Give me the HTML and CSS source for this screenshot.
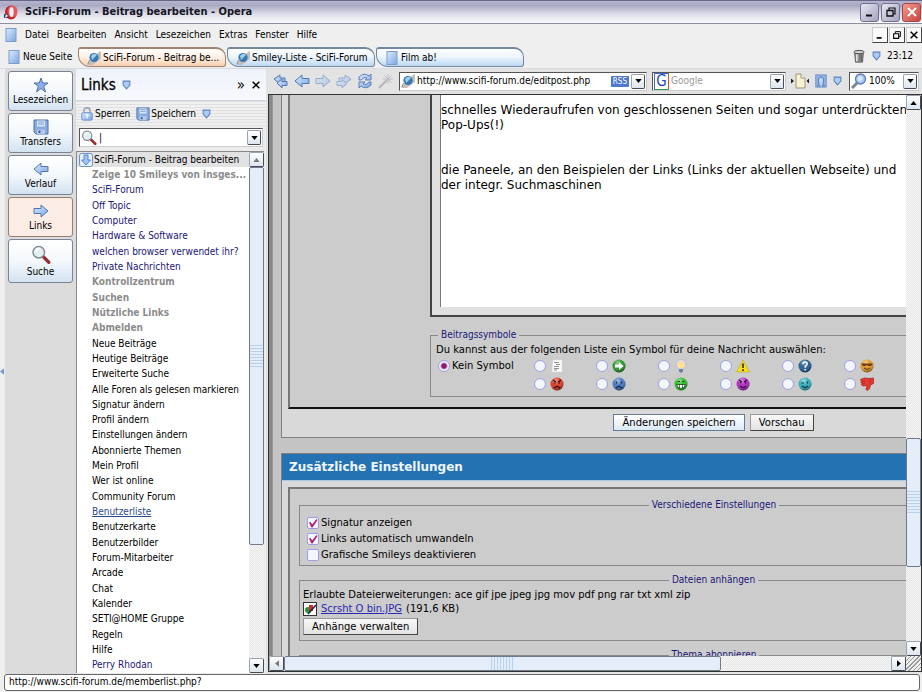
FILE: index.html
```html
<!DOCTYPE html>
<html lang="de">
<head>
<meta charset="utf-8">
<title>SciFi-Forum - Beitrag bearbeiten - Opera</title>
<link rel="stylesheet" href="styles.css">
</head>
<body>
<svg class="defs" aria-hidden="true">
  <defs>
    <linearGradient id="blue" x1="0" y1="0" x2="1" y2="1"><stop offset="0" stop-color="#dcebff"/><stop offset="1" stop-color="#7ba6e0"/></linearGradient>
    <radialGradient id="gloss" cx=".4" cy=".25" r=".7"><stop offset="0" stop-color="#fff" stop-opacity=".5"/><stop offset=".5" stop-color="#fff" stop-opacity="0"/><stop offset="1" stop-color="#000" stop-opacity=".35"/></radialGradient>
    <symbol id="page" viewBox="0 0 12 14"><rect x="1" y=".5" width="10" height="13" fill="url(#blue)" stroke="#7d9cc6"/></symbol>
    <symbol id="planet" viewBox="0 0 14 14"><path d="M0 13L13 0L14 1V8L6 14H1z" fill="#c4bfbb"/><circle cx="7" cy="6.500" r="4.600" fill="#3478b4"/><path d="M4 5Q7 1 10 4L5 9z" fill="#9ccfeb"/><path d="M1 13Q1 10 5 7" fill="none" stroke="#8a8480" stroke-width=".9"/></symbol>
    <symbol id="down" viewBox="0 0 8 9"><path d="M1 1h6v3.500L4 8 1 4.500z" fill="#a9cdf5" stroke="#6383bb"/></symbol>
    <symbol id="left" viewBox="0 0 16 14"><path d="M1 7L8 1v3.500h7v5H8V13z" fill="url(#blue)" stroke="#5077b5"/></symbol>
    <symbol id="right" viewBox="0 0 16 14"><path d="M15 7L8 1v3.500H1v5h7V13z" fill="url(#blue)" stroke="#5077b5"/></symbol>
    <symbol id="rewind" viewBox="0 0 16 14"><path d="M1 5l6-4v3h5v4H7v2z" fill="url(#blue)" stroke="#5077b5"/><path d="M4 9l5-4v2.500h5v4H9V14z" fill="url(#blue)" stroke="#5077b5"/></symbol>
    <symbol id="forward" viewBox="0 0 16 14"><path d="M15 5L9 1v3H3v4h6v2z" fill="url(#blue)" stroke="#5077b5"/><path d="M11 9.500L6 5.500v2H1v4h5V14z" fill="url(#blue)" stroke="#5077b5"/></symbol>
    <symbol id="reload" viewBox="0 0 16 16"><path d="M2 7V4q5-5 10-1l2-2v6H8l2-2q-3-2-6 2zM14 9v3q-5 5-10 1l-2 2V9h6l-2 2q3 2 6-2z" fill="url(#blue)" stroke="#5077b5" stroke-width=".9"/></symbol>
    <symbol id="wand" viewBox="0 0 16 16"><path d="M1 15L9 7" stroke="#888" stroke-width="2"/><path d="M10 1v10M5 6h10M6.500 2.500l7 7M13.500 2.500l-7 7" stroke="#8e98aa"/></symbol>
    <symbol id="star" viewBox="0 0 16 16"><path d="M8 1l1.700 5H15l-4.300 3.200L12.500 15 8 11.500 3.500 15l1.800-5.800L1 6h5.300z" fill="#8db2ea" stroke="#4f70a8"/></symbol>
    <symbol id="disk" viewBox="0 0 16 16"><path d="M1 1h14v14H3l-2-2z" fill="#88abe0" stroke="#4d6ea8"/><path d="M4 1.500h8v6H4z" fill="#d8e5f8"/><path d="M5 3h6M5 5h6" stroke="#829cc8"/><path d="M4 10.500h8V15H4z" fill="#b5c9e8"/><path d="M5.500 11.500h2V14h-2z" fill="#46608f"/></symbol>
    <symbol id="lens" viewBox="0 0 18 18"><path d="M11 10.500l5 5" stroke="#962f32" stroke-width="3" stroke-linecap="round"/><circle cx="7" cy="6.500" r="5.200" fill="#e2efef" stroke="#848a90" stroke-width="1.300"/><path d="M4 6q1-3 4-3" fill="none" stroke="#fff" stroke-width="1.500"/></symbol>
    <symbol id="zoomlens" viewBox="0 0 16 16"><path d="M7 9l-6 6" stroke="#7c8696" stroke-width="3"/><circle cx="9.500" cy="6" r="5" fill="#a9c8f2" stroke="#5c7db4" stroke-width="1.300"/><circle cx="9" cy="5.500" r="2.500" fill="#d9e8fd"/></symbol>
    <symbol id="lock" viewBox="0 0 14 16"><path d="M3.500 8V4q0-3 3.500-3t3.500 3v4" fill="none" stroke="#9ba6b5" stroke-width="1.800"/><rect x="1" y="6.500" width="12" height="8.500" rx="1.500" fill="url(#blue)" stroke="#6689bd"/><path d="M5.500 9.500q1.500-1.500 3 0-.5 1-1.500 1.500v2" fill="none" stroke="#fff" stroke-width="1.200"/></symbol>
    <symbol id="docdown" viewBox="0 0 14 14"><rect x=".5" y=".5" width="13" height="13" rx="2" fill="#e5f0ff" stroke="#6e91c4"/><path d="M5 2h4v5h2.500L7 12 2.500 7H5z" fill="#9fc3f5" stroke="#4c76bd" stroke-width=".8"/></symbol>
    <symbol id="trash" viewBox="0 0 14 16"><path d="M2 4h10l-1 11H3z" fill="#999" stroke="#555"/><path d="M4.500 6v8" stroke="#eee" stroke-width="1.500"/><path d="M8 6v8M10 6v8" stroke="#555"/><ellipse cx="7" cy="3.500" rx="6" ry="2" fill="#ccc" stroke="#444"/></symbol>
    <symbol id="fit" viewBox="0 0 18 16"><path d="M5 1h5l4 4v10H5z" fill="#f7f3d2" stroke="#9a9678"/><path d="M10 1v4h4" fill="#fff" stroke="#9a9678"/><path d="M0 5.500L3 8l-3 2.500zM18 5.500L15.500 8l2.500 2.500z" fill="#222"/></symbol>
    <symbol id="user" viewBox="0 0 14 16"><rect x="1" y="1" width="12" height="14" fill="#8fb2e6" stroke="#6d90c6"/><path d="M2.500 13.500h2.500q0-2-1-4.500-.5-5.500 3-5.500t3 5.500q-1 2.500-1 4.500h2.500" fill="#b9d3f6" stroke="#4e6fa8"/></symbol>
    <symbol id="opera" viewBox="0 0 16 16"><ellipse cx="8" cy="8.500" rx="6" ry="7" fill="#c3222b"/><ellipse cx="9.500" cy="7.500" rx="5" ry="6" fill="#e4575a"/><ellipse cx="8.500" cy="8" rx="2.200" ry="5" fill="#f4eef4"/><path d="M1 10h4v4H1z" fill="#36465c"/><path d="M3 10l2 2-3 2" fill="#e8edf5"/></symbol>
    <symbol id="note" viewBox="0 0 14 14"><path d="M3 1h9v12H2z" fill="#fafafa" stroke="#ddd" stroke-width=".5"/><path d="M4 3.500h5M6 5.500h4M4 7.500h5M4 9.500h5M4 11h3" stroke="#777" stroke-width=".8"/></symbol>
    <symbol id="go" viewBox="0 0 14 14"><circle cx="7" cy="7" r="6.500" fill="#2c962c"/><circle cx="7" cy="7" r="6.500" fill="url(#gloss)"/><path d="M3 5.500h4V3l4.500 4L7 11V8.500H3z" fill="#fff"/></symbol>
    <symbol id="bulb" viewBox="0 0 14 14"><circle cx="7" cy="5.500" r="5" fill="#dedbe4" stroke="#b2afb9" stroke-width=".6"/><circle cx="7" cy="6" r="3.200" fill="#ffe28a"/><path d="M5 10h4v2.500L7 14l-2-1.500z" fill="#6c7da8"/></symbol>
    <symbol id="warn" viewBox="0 0 14 14"><path d="M7 1l6.500 12H.5z" fill="#f5dd20" stroke="#c2a917" stroke-width=".6"/><path d="M7 4.500v4.500M7 10.300v1.700" stroke="#222" stroke-width="1.500"/></symbol>
    <symbol id="ask" viewBox="0 0 14 14"><circle cx="7" cy="7" r="6.500" fill="#245d90"/><circle cx="7" cy="7" r="6.500" fill="url(#gloss)"/><path d="M5 5q.2-2 2.200-2T9.200 5Q9 6.500 7.200 7.500v1.200M7.200 10v1.600" fill="none" stroke="#fff" stroke-width="1.500"/></symbol>
    <symbol id="cool" viewBox="0 0 14 14"><circle cx="7" cy="7" r="6.500" fill="#e09a2c"/><circle cx="7" cy="7" r="6.500" fill="url(#gloss)"/><path d="M1 4.500h12L11 7H8L7 5.500 6 7H3z" fill="#6b3a10"/><path d="M4 9q3 3 6 0" fill="none" stroke="#5a3010"/></symbol>
    <symbol id="angry" viewBox="0 0 14 14"><circle cx="7" cy="7" r="6.500" fill="#d83c28"/><circle cx="7" cy="7" r="6.500" fill="url(#gloss)"/><path d="M3 3l3 2M11 3L8 5M4 6h1.500M8.500 6H10M4 11q3-3 6 0" fill="none" stroke="#3c0b08" stroke-width="1.200"/></symbol>
    <symbol id="sad" viewBox="0 0 14 14"><circle cx="7" cy="7" r="6.500" fill="#4a78c0"/><circle cx="7" cy="7" r="6.500" fill="url(#gloss)"/><path d="M4.500 4.500v2M9.500 4.500v2M4 11q3-3 6 0" fill="none" stroke="#16274f" stroke-width="1.300"/></symbol>
    <symbol id="grin" viewBox="0 0 14 14"><circle cx="7" cy="7" r="6.500" fill="#2fbd2c"/><circle cx="7" cy="7" r="6.500" fill="url(#gloss)"/><path d="M3.500 5l1.500-1L6 5M8 5l1-1 1.500 1" fill="none" stroke="#123f10"/><path d="M2.500 7.500h9q-1 4-4.500 4t-4.500-4z" fill="#fff" stroke="#123f10" stroke-width=".8"/><path d="M5.500 7.500v4M8.500 7.500v4" stroke="#123f10" stroke-width=".7"/></symbol>
    <symbol id="devil" viewBox="0 0 14 14"><circle cx="7" cy="7" r="6.500" fill="#b02cc0"/><circle cx="7" cy="7" r="6.500" fill="url(#gloss)"/><path d="M3 3l3 2M11 3L8 5M4.500 5v1.500M9.500 5v1.500M4 9q3 3 6 0" fill="none" stroke="#3a0a44" stroke-width="1.200"/></symbol>
    <symbol id="wink" viewBox="0 0 14 14"><circle cx="7" cy="7" r="6.500" fill="#36aebc"/><circle cx="7" cy="7" r="6.500" fill="url(#gloss)"/><path d="M3.500 6h2.500M9.500 4.500v2M4 9q3 3 6 0" fill="none" stroke="#0d3c44" stroke-width="1.200"/></symbol>
    <symbol id="thumb" viewBox="0 0 14 14"><path d="M.5 2.500l4-1.500 5 .5L13.500 1v5.500l-3 1.500-1 4-2.500 1.500-1-1L7 8.500l-4 .5-1.500-1 .3-1.500-1-1 .5-1.500z" fill="#e43a34" stroke="#a61d1d" stroke-width=".7"/><path d="M2 4.500h3M2 6.500h3M10 2v5" stroke="#a61d1d" stroke-width=".6"/></symbol>
    <symbol id="jpg" viewBox="0 0 14 14"><rect x=".5" y=".5" width="13" height="13" fill="#fff" stroke="#333"/><circle cx="5" cy="8" r="3" fill="#299532"/><path d="M6 3h4v6H6z" fill="#d22b2b"/><path d="M5 12L13 3" stroke="#1c2350" stroke-width="1.500"/></symbol>
    <symbol id="tri-d" viewBox="0 0 8 5"><path d="M0 0h8L4 5z" fill="currentColor"/></symbol>
    <symbol id="tri-u" viewBox="0 0 8 5"><path d="M0 5h8L4 0z" fill="currentColor"/></symbol>
    <symbol id="tri-l" viewBox="0 0 5 8"><path d="M5 0v8L0 4z" fill="currentColor"/></symbol>
    <symbol id="tri-r" viewBox="0 0 5 8"><path d="M0 0v8l5-4z" fill="currentColor"/></symbol>
    <symbol id="min" viewBox="0 0 12 12"><path d="M2 9.500h6" stroke="currentColor" stroke-width="2"/></symbol>
    <symbol id="restore" viewBox="0 0 12 12"><path d="M4 4V2h6v6H8" fill="none" stroke="currentColor" stroke-width="1.200"/><path d="M2 4.500h6V10H2z" fill="none" stroke="currentColor" stroke-width="1.300"/></symbol>
    <symbol id="close" viewBox="0 0 12 12"><path d="M2 2l8 8M10 2l-8 8" stroke="currentColor" stroke-width="1.800"/></symbol>
  </defs>
</svg>

<header class="titlebar">
  <svg class="i16"><use href="#opera"/></svg>
  <h1>SciFi-Forum - Beitrag bearbeiten - Opera</h1>
  <div class="winbuttons">
    <button aria-label="Minimieren"><svg class="i12"><use href="#min"/></svg></button>
    <button aria-label="Wiederherstellen"><svg class="i12"><use href="#restore"/></svg></button>
    <button aria-label="Schließen" class="red"><svg class="i12"><use href="#close"/></svg></button>
  </div>
</header>

<nav class="menubar">
  <svg class="i14"><use href="#page"/></svg>
  <button>Datei</button><button>Bearbeiten</button><button>Ansicht</button><button>Lesezeichen</button><button>Extras</button><button>Fenster</button><button>Hilfe</button>
  <div class="docbuttons">
    <button aria-label="Seite minimieren"><svg class="i10"><use href="#min"/></svg></button>
    <button aria-label="Seite wiederherstellen"><svg class="i10"><use href="#restore"/></svg></button>
    <button aria-label="Seite schließen"><svg class="i10"><use href="#close"/></svg></button>
  </div>
</nav>

<div class="tabbar">
  <button class="newpage"><svg class="i14"><use href="#page"/></svg>Neue Seite</button>
  <div class="tabs">
    <button class="tab active"><svg class="i14"><use href="#planet"/></svg>SciFi-Forum - Beitrag be...</button>
    <button class="tab"><svg class="i14"><use href="#planet"/></svg>Smiley-Liste - SciFi-Forum</button>
    <button class="tab"><svg class="i14"><use href="#page"/></svg>Film ab!</button>
  </div>
  <div class="tray"><svg class="i14"><use href="#trash"/></svg><svg class="i9"><use href="#down"/></svg><span>23:12</span></div>
</div>

<div class="main">
  <div class="edge"><svg class="grip"><use href="#tri-l"/></svg></div>
  <nav class="rail">
    <button><svg class="i16"><use href="#star"/></svg>Lesezeichen</button>
    <button><svg class="i16"><use href="#disk"/></svg>Transfers</button>
    <button><svg class="i16"><use href="#left"/></svg>Verlauf</button>
    <button class="on"><svg class="i16"><use href="#right"/></svg>Links</button>
    <button class="tall"><svg class="i20"><use href="#lens"/></svg>Suche</button>
  </nav>

  <aside class="panel">
    <div class="panelhead"><h2>Links</h2><svg class="i9"><use href="#down"/></svg>
      <button class="more" aria-label="Mehr">»</button><button aria-label="Panel schließen"><svg class="i10"><use href="#close"/></svg></button></div>
    <div class="paneltools">
      <button><svg class="i14"><use href="#lock"/></svg>Sperren</button>
      <button><svg class="i14"><use href="#disk"/></svg>Speichern</button>
      <svg class="i9"><use href="#down"/></svg>
    </div>
    <div class="combo panelsearch"><svg class="i16"><use href="#lens"/></svg><input type="text" aria-label="Links suchen" value="|"><button aria-label="Auswahl"><svg class="tri"><use href="#tri-d"/></svg></button></div>
    <div class="listbox">
      <ul class="links">
        <li class="root"><svg class="i14"><use href="#docdown"/></svg>SciFi-Forum - Beitrag bearbeiten</li>
        <li class="off">Zeige 10 Smileys von insges...</li>
        <li><a href="#">SciFi-Forum</a></li>
        <li><a href="#">Off Topic</a></li>
        <li><a href="#">Computer</a></li>
        <li><a href="#">Hardware &amp; Software</a></li>
        <li><a href="#">welchen browser verwendet ihr?</a></li>
        <li><a href="#">Private Nachrichten</a></li>
        <li class="off">Kontrollzentrum</li>
        <li class="off">Suchen</li>
        <li class="off">Nützliche Links</li>
        <li class="off">Abmelden</li>
        <li>Neue Beiträge</li>
        <li>Heutige Beiträge</li>
        <li>Erweiterte Suche</li>
        <li>Alle Foren als gelesen markieren</li>
        <li>Signatur ändern</li>
        <li>Profil ändern</li>
        <li>Einstellungen ändern</li>
        <li>Abonnierte Themen</li>
        <li>Mein Profil</li>
        <li>Wer ist online</li>
        <li>Community Forum</li>
        <li><a href="#" class="hover">Benutzerliste</a></li>
        <li>Benutzerkarte</li>
        <li>Benutzerbilder</li>
        <li>Forum-Mitarbeiter</li>
        <li>Arcade</li>
        <li>Chat</li>
        <li>Kalender</li>
        <li>SETI@HOME Gruppe</li>
        <li>Regeln</li>
        <li>Hilfe</li>
        <li><a href="#">Perry Rhodan</a></li>
      </ul>
      <div class="vscroll side"><button class="soft" aria-label="Nach oben"><svg class="tri"><use href="#tri-u"/></svg></button><div class="track"><div class="thumb"></div></div><button aria-label="Nach unten"><svg class="tri"><use href="#tri-d"/></svg></button></div>
    </div>
  </aside>

  <section class="browser">
    <div class="address">
      <button aria-label="Anfang"><svg class="i16"><use href="#rewind"/></svg></button>
      <button aria-label="Zurück"><svg class="i16"><use href="#left"/></svg></button>
      <button aria-label="Vor" class="dim"><svg class="i16"><use href="#right"/></svg></button>
      <button aria-label="Schneller Vorlauf" class="dim"><svg class="i16"><use href="#forward"/></svg></button>
      <button aria-label="Neu laden"><svg class="i16"><use href="#reload"/></svg></button>
      <button aria-label="Zauberstab" class="dim"><svg class="i16"><use href="#wand"/></svg></button>
      <div class="combo url"><svg class="i14"><use href="#planet"/></svg><input type="text" aria-label="Adresse" value="http://www.scifi-forum.de/editpost.php"><span class="rss">RSS</span><button aria-label="Adressen"><svg class="tri"><use href="#tri-d"/></svg></button></div>
      <div class="combo google"><span class="g">G</span><input type="text" aria-label="Google" placeholder="Google"><button aria-label="Suchmaschinen"><svg class="tri"><use href="#tri-d"/></svg></button></div>
      <svg class="i18"><use href="#fit"/></svg>
      <svg class="i14"><use href="#user"/></svg>
      <svg class="i9"><use href="#down"/></svg>
      <div class="combo zoom"><svg class="i16"><use href="#zoomlens"/></svg><input type="text" aria-label="Zoom" value="100%"><button aria-label="Zoomstufen"><svg class="tri"><use href="#tri-d"/></svg></button></div>
    </div>

    <div class="frame">
      <div class="viewport">
        <form class="doc">
          <div class="card first">
            <div class="inner">
              <div class="editor"><textarea aria-label="Nachricht">schnelles Wiederaufrufen von geschlossenen Seiten und sogar unterdrückten
Pop-Ups(!)


die Paneele, an den Beispielen der Links (Links der aktuellen Webseite) und
der integr. Suchmaschinen</textarea></div>
              <fieldset class="symbols">
                <legend>Beitragssymbole</legend>
                <p>Du kannst aus der folgenden Liste ein Symbol für deine Nachricht auswählen:</p>
                <div class="icons">
                  <label class="none"><input type="radio" name="s" checked>Kein Symbol</label>
                  <label><input type="radio" name="s" aria-label="Notiz"><svg class="i14"><use href="#note"/></svg></label>
                  <label><input type="radio" name="s" aria-label="Pfeil"><svg class="i14"><use href="#go"/></svg></label>
                  <label><input type="radio" name="s" aria-label="Idee"><svg class="i14"><use href="#bulb"/></svg></label>
                  <label><input type="radio" name="s" aria-label="Achtung"><svg class="i14"><use href="#warn"/></svg></label>
                  <label><input type="radio" name="s" aria-label="Frage"><svg class="i14"><use href="#ask"/></svg></label>
                  <label><input type="radio" name="s" aria-label="Cool"><svg class="i14"><use href="#cool"/></svg></label>
                  <label class="second"><input type="radio" name="s" aria-label="Böse"><svg class="i14"><use href="#angry"/></svg></label>
                  <label><input type="radio" name="s" aria-label="Traurig"><svg class="i14"><use href="#sad"/></svg></label>
                  <label><input type="radio" name="s" aria-label="Grinsen"><svg class="i14"><use href="#grin"/></svg></label>
                  <label><input type="radio" name="s" aria-label="Teufel"><svg class="i14"><use href="#devil"/></svg></label>
                  <label><input type="radio" name="s" aria-label="Zwinkern"><svg class="i14"><use href="#wink"/></svg></label>
                  <label><input type="radio" name="s" aria-label="Daumen runter"><svg class="i14"><use href="#thumb"/></svg></label>
                </div>
              </fieldset>
            </div>
            <div class="actions"><button type="button" class="btn default">Änderungen speichern</button><button type="button" class="btn">Vorschau</button></div>
          </div>

          <div class="card">
            <h3>Zusätzliche Einstellungen</h3>
            <div class="inner options">
              <fieldset class="checks">
                <legend>Verschiedene Einstellungen</legend>
                <label><input type="checkbox" checked>Signatur anzeigen</label>
                <label><input type="checkbox" checked>Links automatisch umwandeln</label>
                <label><input type="checkbox">Grafische Smileys deaktivieren</label>
              </fieldset>
              <fieldset class="files">
                <legend>Dateien anhängen</legend>
                <p>Erlaubte Dateierweiterungen: ace gif jpe jpeg jpg mov pdf png rar txt xml zip</p>
                <p class="file"><svg class="i14"><use href="#jpg"/></svg><a href="#">Scrsht O bin.JPG</a> (191,6 KB)</p>
                <button type="button" class="btn">Anhänge verwalten</button>
              </fieldset>
              <fieldset class="topic"><legend>Thema abonnieren</legend></fieldset>
            </div>
          </div>
        </form>
      </div>
      <div class="vscroll page"><button aria-label="Seite nach oben"><svg class="tri"><use href="#tri-u"/></svg></button><div class="track"><div class="thumb"></div></div><button aria-label="Seite nach unten"><svg class="tri"><use href="#tri-d"/></svg></button></div>
      <div class="hscroll"><button class="soft" aria-label="Seite nach links"><svg class="tri side"><use href="#tri-l"/></svg></button><div class="track"><div class="thumb"></div></div><button aria-label="Seite nach rechts"><svg class="tri side"><use href="#tri-r"/></svg></button></div>
      <div class="corner"></div>
    </div>
  </section>
</div>

<footer class="status"><span>http://www.scifi-forum.de/memberlist.php?</span></footer>
</body>
</html>
```

FILE: styles.css
```css
:root {
  --ui: "DejaVu Sans Condensed", "DejaVu Sans", sans-serif;
  --web: "DejaVu Sans", sans-serif;
}
* { box-sizing: border-box; }
body {
  margin: 0;
  height: 100vh;
  display: flex;
  flex-direction: column;
  overflow: hidden;
  background: #efefef;
  color: #000;
  font: 10px/12px var(--ui);
}
h1, h2, h3, p, ul { margin: 0; padding: 0; }
button, input, textarea { font: inherit; color: inherit; margin: 0; }
button { padding: 0; border: 0; background: none; white-space: nowrap; }
svg { display: block; flex: none; }
.defs { position: absolute; width: 0; height: 0; }
.i9 { width: 9px; height: 10px; }
.i10 { width: 10px; height: 10px; }
.i12 { width: 12px; height: 12px; }
.i14 { width: 14px; height: 14px; }
.i16 { width: 16px; height: 16px; }
.i18 { width: 18px; height: 16px; }
.i20 { width: 20px; height: 20px; }
.tri { width: 7px; height: 4px; }
.tri.side { width: 4px; height: 7px; }

/* window chrome */
.titlebar {
  display: flex;
  align-items: center;
  gap: 6px;
  height: 24px;
  padding: 0 1px 0 3px;
  border-top: 1px solid #67678c;
  border-bottom: 1px solid #8d8da3;
  background: linear-gradient(#b5b5cf, #a9a9c3 20%, #dedee9 60%, #fafafc);
}
.titlebar h1 { flex: 1; font-size: 11px; line-height: 14px; font-weight: bold; color: #15151f; }
.winbuttons { display: flex; gap: 2px; }
.winbuttons button {
  display: grid;
  place-items: center;
  width: 19px;
  height: 19px;
  border: 1px solid #70708f;
  border-radius: 3px;
  background: linear-gradient(135deg, #e6e6f2, #a2a2bf);
  color: #111;
}
.winbuttons .red { background: linear-gradient(135deg, #f09c90, #c9453f); color: #fff; border-color: #a44; }

.menubar { display: flex; align-items: center; gap: 8px; height: 21px; padding-left: 4px; }
.menubar > .i14 { margin-right: -1px; }
.docbuttons { display: flex; gap: 1px; margin-left: auto; }
.docbuttons button {
  display: grid;
  place-items: center;
  width: 16px;
  height: 16px;
  background: #fafafa;
  border: 1px solid;
  border-color: #ccc #444 #444 #ccc;
}

.tabbar { display: flex; align-items: center; height: 24px; padding: 0 9px 0 7px; border-bottom: 1px solid #d8dce2; }
.newpage { display: flex; align-items: center; gap: 2px; width: 71px; }
.tabs { display: flex; align-self: stretch; gap: 1px; padding: 2px 0 1px; flex: 1; }
.tab {
  display: flex;
  align-items: center;
  gap: 2px;
  width: 148px;
  padding-left: 8px;
  border: 1px solid #73889d;
  border-top-width: 2px;
  border-radius: 3px 10px 3px 12px;
  background: linear-gradient(#fff, #eaf3fc 50%, #bcd8f3);
}
.tab.active { border-color: #a08371; background: linear-gradient(#fff, #fdeee2 50%, #f9cfaf); }
.tray { display: flex; align-items: center; gap: 6px; padding-bottom: 2px; }

.main { flex: 1; display: flex; min-height: 0; }
.edge { width: 5px; display: flex; align-items: center; color: #7799cc; background: #efefef; }
.grip { width: 4px; height: 7px; }

.rail { width: 71px; padding: 2px 3px; display: flex; flex-direction: column; gap: 2px; background: #dcdcdc; }
.rail button {
  display: flex;
  flex-direction: column;
  align-items: center;
  justify-content: center;
  gap: 1px;
  height: 40px;
  border: 1px solid #7b8494;
  border-radius: 3px;
  background: linear-gradient(#fff, #f4f8fc 50%, #d3e2f1);
}
.rail .on { border-color: #947d72; background: #fcece6; }
.rail .tall { height: 44px; }

/* link panel */
.panel { width: 190px; display: flex; flex-direction: column; background: #ececec; }
.panelhead { display: flex; align-items: center; gap: 6px; height: 32px; padding: 0 5px; background: linear-gradient(#eef2fa, #f7f9fd); border-bottom: 1px solid #cdd3e0; }
.panelhead h2 { font-size: 15px; line-height: 18px; font-weight: normal; -webkit-text-stroke: 0.3px; }
.panelhead .more { margin-left: auto; font-size: 15px; }
.paneltools { display: flex; align-items: center; gap: 6px; height: 25px; padding: 0 4px; background: repeating-linear-gradient(#e0e0e0 0 1px, #f0f0f0 1px 3px); }
.paneltools button { display: flex; align-items: center; gap: 1px; }
.combo { display: flex; align-items: center; height: 19px; padding: 1px; background: #fff; border: 1px solid #555; border-right-color: #ccc; border-bottom-color: #ccc; }
.combo input { flex: 1; min-width: 0; padding: 0 2px; border: 0; background: none; outline: 0; }
.combo button { display: grid; place-items: center; align-self: stretch; width: 14px; }
.combo button, .vscroll button, .hscroll button { background: linear-gradient(#fff, #dde5ee); border: 1px solid; border-color: #9aa3ad #444b55 #444b55 #9aa3ad; border-radius: 2px; }
.panelsearch { margin: 2px 3px 4px; }
.listbox { flex: 1; display: flex; min-height: 0; margin: 0 2px 1px 0; border: 1px solid #888; border-right: 0; border-bottom: 0; background: #fff; }
.links { flex: 1; min-width: 0; list-style: none; display: grid; grid-auto-rows: minmax(0, 1fr); }
.links li { display: flex; align-items: center; padding-left: 15px; white-space: nowrap; }
.links .root { padding-left: 2px; gap: 1px; background: #e2e2e2; }
.links .off { color: #8c8c8c; font-weight: bold; }
.links a { color: #1b1678; text-decoration: none; }
.links .hover { color: #2b4a8c; text-decoration: underline; }

.vscroll { display: flex; flex-direction: column; width: 15px; }
.vscroll button { display: grid; place-items: center; height: 15px; }
.vscroll .track { flex: 1; display: flex; flex-direction: column; min-height: 0; }
.track { background: repeating-conic-gradient(#e6e6e6 0 25%, #f6f6f6 0 50%) 0 0 / 2px 2px; }
.thumb { border: 1px solid #6f7b8b; border-radius: 2px; background: repeating-linear-gradient(#b8d2ee 0 1px, #e2edf9 1px 3px) center / 100% 22px no-repeat #e5eef8; }
.side .thumb { height: 77%; }
.page .track::before { content: ""; flex: 62; }
.page .thumb { flex: 24; }
.page .track::after { content: ""; flex: 14; }
.soft { color: #777; }

/* address bar */
.browser { flex: 1; min-width: 0; display: flex; flex-direction: column; background: #e3e3e3; }
.address { display: flex; align-items: center; gap: 5px; height: 25px; padding: 0 3px 1px 7px; }
.dim { opacity: .5; }
.url { flex: 1; }
.google { width: 134px; }
.zoom { width: 70px; margin-left: 2px; }
.rss { margin-right: 2px; padding: 0 2px; background: #4d79d1; color: #fff; font-size: 8px; line-height: 11px; border-radius: 1px; }
.g { width: 15px; line-height: 15px; text-align: center; font-size: 15px; color: #2147c0; border: 1px solid; border-color: #3a68d8 #d64a32 #2f9a47 #3a68d8; }
.google input::placeholder { color: #999; opacity: 1; }

/* web page */
.frame {
  flex: 1;
  min-height: 0;
  display: grid;
  grid-template: minmax(0, 1fr) 15px / minmax(0, 1fr) 15px;
  margin: 0 0 2px 2px;
  border: 1px solid #333;
}
.viewport { overflow: hidden; border-left: 3px solid #888; background: #c4c4c4; }
.doc { min-width: 882px; padding: 0 8px; border-left: 1px solid #999; font: 10px/12px var(--web); }
.card { border: 1px solid #808080; background: #d9d9d9; }
.first { border-top: 0; margin-bottom: 15px; }
.inner { margin: 0 6px; background: #ccc; border-left: 2px solid #777; }
.first .inner { padding: 0 0 10px 140px; border-bottom: 2px solid #111; }
.editor { padding: 0 8px 8px; background: #e0e0e0; border: 2px solid #444; border-top: 0; }
textarea { display: block; width: 100%; height: 212px; padding: 8px 0; border: 0; border-left: 1px solid #777; outline: 0; resize: none; overflow: hidden; background: #fff; font: 12px/15px var(--web); }
fieldset { margin: 0; padding: 0 5px; border: 1px solid #888; min-width: 0; }
legend { padding: 0 3px; color: #1b1678; font: 10px/12px var(--ui); }
.symbols { margin-top: 12px; height: 68px; }
.symbols legend { margin-left: 2px; }
.symbols p { margin-top: 3px; }
.icons { display: grid; grid-template-columns: 96px repeat(6, 62px); grid-auto-rows: 18px; margin-top: 1px; padding-left: 2px; }
.icons label { display: flex; align-items: center; gap: 4px; }
.icons .none { gap: 2px; }
.icons .second { grid-column-start: 2; }
input[type=radio], input[type=checkbox] { appearance: none; flex: none; width: 12px; height: 12px; border: 1px solid #9d9de0; background: #f2f6ff; }
input[type=radio] { border-radius: 50%; }
input[type=radio]:checked { background: radial-gradient(circle, #8b1765 0 2px, #f2f6ff 4px); }
input[type=checkbox] { border-radius: 2px; }
input[type=checkbox]:checked::before {
  content: "";
  display: block;
  height: 10px;
  background: #b3187a;
  clip-path: polygon(10% 45%, 25% 40%, 42% 65%, 85% 10%, 95% 20%, 45% 95%, 35% 95%);
}
.actions { display: flex; justify-content: center; gap: 5px; padding: 5px 0 6px; }
.btn { height: 17px; padding: 0 8px; background: linear-gradient(#f8f8f8, #e3e3e3); border: 1px solid; border-color: #999 #444 #444 #999; }
.default { background: linear-gradient(#fff, #dce9f6); border-color: #667a94; }
.card h3 { height: 27px; padding-left: 7px; border-bottom: 1px solid #a9c8e8; background: #2572b2; color: #eef6ff; font-size: 12px; line-height: 26px; }
.options { margin-top: 6px; padding: 10px 10px 0 9px; border-top: 2px solid #777; }
.options legend { margin: 0 auto; }
.options fieldset { margin-bottom: 8px; }
.checks { height: 67px; }
.checks label { display: flex; align-items: center; gap: 2px; height: 16px; padding-left: 2px; }
.checks legend { margin-bottom: 2px; }
.checks legend + label { margin-top: 2px; }
.files { height: 67px; }
.options .files { padding: 2px 4px 0 3px; }
.files p { line-height: 14px; }
.files .btn { margin-top: 2px; }
.file { display: flex; gap: 4px; }
.file a { color: #2a2ab0; }
.topic { height: 60px; }

.hscroll { display: flex; }
.hscroll button { display: grid; place-items: center; width: 15px; }
.hscroll .track { flex: 1; display: flex; }
.hscroll .thumb { width: 72%; background: repeating-linear-gradient(90deg, #b8d2ee 0 1px, #e2edf9 1px 3px) center / 24px 100% no-repeat #e5eef8; }
.corner { background: repeating-linear-gradient(135deg, #999 0 1px, #eee 1px 3px); }

.status { height: 17px; margin: 0 2px 1px 4px; padding: 0 4px; border: 1px solid #666; border-radius: 3px; background: #fff; line-height: 14px; }
```
